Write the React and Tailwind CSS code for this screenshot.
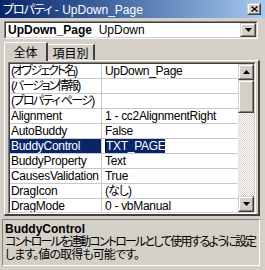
import React from "react";

const J = ({ children, t = "tracking-[-2px]" }) => <span className={t}>{children}</span>;

const rows = [
  [<J>(オブジェクト名)</J>, "UpDown_Page"],
  [<J>(バージョン情報)</J>, ""],
  [<J t="tracking-[-1.6px]">(プロパティ ページ)</J>, ""],
  ["Alignment", "1 - cc2AlignmentRight"],
  ["AutoBuddy", "False"],
  ["BuddyControl", "TXT_PAGE", true],
  ["BuddyProperty", "Text"],
  ["CausesValidation", "True"],
  ["DragIcon", <J t="tracking-[-1px]">(なし)</J>],
  ["DragMode", "0 - vbManual"],
];

const font = "font-['Liberation_Sans','Noto_Sans_CJK_JP',sans-serif] [font-feature-settings:'palt']";

function Btn({ children, className = "" }) {
  return (
    <div className={"border border-t-[#d4d0c8] border-l-[#d4d0c8] border-b-[#404040] border-r-[#404040] " + className}>
      <div className="w-full h-full border border-t-white border-l-white border-b-[#808080] border-r-[#808080] bg-[#d4d0c8] flex items-center justify-center">
        {children}
      </div>
    </div>
  );
}

function Down() {
  return (
    <svg width="7" height="4" viewBox="0 0 7 4"><path d="M0 0h7L3.5 4z" fill="#000" /></svg>
  );
}
function Up() {
  return (
    <svg width="7" height="4" viewBox="0 0 7 4"><path d="M0 4h7L3.5 0z" fill="#000" /></svg>
  );
}

export default function App() {
  return (
    <div className={"w-[265px] h-[270px] bg-[#d4d0c8] overflow-hidden flex flex-col text-[12px] leading-[14px] text-black " + font}>
      {/* title */}
      <div className="h-[18px] shrink-0 bg-linear-to-r from-[#0a246a] to-[#a6caf0] flex items-center pl-[3px] pr-[4px]">
        <span className="text-white text-[12px] flex-1 pt-[1px] whitespace-nowrap"><J t="tracking-[-1px]">プロパティ</J> - UpDown_Page</span>
        <Btn className="w-[14px] h-[12px]">
          <svg width="7" height="6" viewBox="0 0 7 6"><path d="M0.5 0.5l6 5M6.5 0.5l-6 5" stroke="#000" strokeWidth="1.3" /></svg>
        </Btn>
      </div>

      {/* combo */}
      <div className="mt-[3px] ml-[4px] w-[254px] h-[18px] border border-t-[#808080] border-l-[#808080] border-b-white border-r-white">
        <div className="w-full h-full border border-t-[#404040] border-l-[#404040] border-b-[#d4d0c8] border-r-[#d4d0c8] bg-white flex items-center pl-[2px] pr-[0px]">
          <span className="flex-1 whitespace-nowrap"><b>UpDown_Page</b>&nbsp; UpDown</span>
          <Btn className="w-[16px] h-[14px]"><Down /></Btn>
        </div>
      </div>

      {/* tabs */}
      <div className="mt-[3px] ml-[4px] h-[18px] flex items-end relative z-10">
        <div className="w-[44px] h-[19px] -mb-[1px] bg-[#d4d0c8] border-l border-t border-white border-r-2 border-r-[#404040] rounded-t-[2px] flex items-start justify-center pt-[3px]">
          <span>全体</span>
        </div>
        <div className="w-[47px] h-[16px] border-t border-white border-r-2 border-r-[#404040] flex items-start justify-center pt-[2px]">
          <span>項目別</span>
        </div>
      </div>

      {/* tab page */}
      <div className="ml-[4px] w-[256px] h-[156px] border-t border-l border-white border-r-2 border-b-2 border-r-[#404040] border-b-[#404040] pt-[1px] pl-[3px]">
        <div className="w-[248px] h-[152px] border border-t-[#808080] border-l-[#808080] border-b-white border-r-white">
          <div className="w-full h-full border border-t-[#404040] border-l-[#404040] border-b-[#d4d0c8] border-r-[#d4d0c8] bg-white flex overflow-hidden">
            <div className="flex-1 flex flex-col tracking-[-0.3px]">
              {rows.map(([k, v, sel], i) => (
                <div key={i} className="h-[15px] shrink-0 flex border-b border-[#c8c8c8]">
                  <div className={"w-[92px] shrink-0 border-r border-[#c8c8c8] pl-[1px] whitespace-nowrap overflow-hidden " + (sel ? "bg-[#0a246a] text-white" : "")}>
                    {k}
                  </div>
                  <div className="flex-1 pl-[3px] whitespace-nowrap overflow-hidden">
                    {sel ? <span className="bg-[#0a246a] text-white border-l border-black pl-[0px]">{v}</span> : v}
                  </div>
                </div>
              ))}
            </div>
            {/* scrollbar */}
            <div className="w-[16px] flex flex-col bg-[image:repeating-conic-gradient(#ffffff_0%_25%,#d4d0c8_0%_50%)] bg-[length:2px_2px]">
              <Btn className="w-[16px] h-[16px]"><Up /></Btn>
              <Btn className="w-[16px] h-[33px]"><span /></Btn>
              <div className="flex-1" />
              <Btn className="w-[16px] h-[16px]"><Down /></Btn>
            </div>
          </div>
        </div>
      </div>

      {/* description */}
      <div className="mt-[3px] ml-[2px] w-[258px] h-[47px] border border-t-[#808080] border-l-[#808080] border-b-white border-r-white px-[2px] pt-[3px] leading-[13px] whitespace-nowrap overflow-hidden">
        <div className="font-bold">BuddyControl</div>
        <div className="tracking-[-1.85px]">コントロールを連動コントロールとして使用するように設定</div>
        <div className="tracking-[-0.9px]">します。値の取得も可能です。</div>
      </div>
    </div>
  );
}
